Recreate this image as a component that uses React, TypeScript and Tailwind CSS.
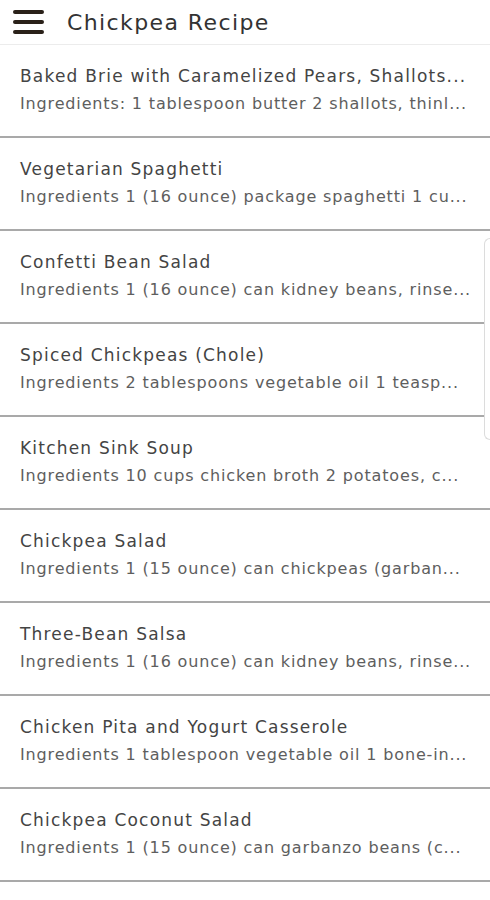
const recipes = [
    { title: "Baked Brie with Caramelized Pears, Shallots...", body: "Ingredients: 1 tablespoon butter 2 shallots, thinl..." },
    { title: "Vegetarian Spaghetti", body: "Ingredients 1 (16 ounce) package spaghetti 1 cu..." },
    { title: "Confetti Bean Salad", body: "Ingredients 1 (16 ounce) can kidney beans, rinse..." },
    { title: "Spiced Chickpeas (Chole)", body: "Ingredients 2 tablespoons vegetable oil 1 teasp..." },
    { title: "Kitchen Sink Soup", body: "Ingredients 10 cups chicken broth 2 potatoes, c..." },
    { title: "Chickpea Salad", body: "Ingredients 1 (15 ounce) can chickpeas (garban..." },
    { title: "Three-Bean Salsa", body: "Ingredients 1 (16 ounce) can kidney beans, rinse..." },
    { title: "Chicken Pita and Yogurt Casserole", body: "Ingredients 1 tablespoon vegetable oil 1 bone-in..." },
    { title: "Chickpea Coconut Salad", body: "Ingredients 1 (15 ounce) can garbanzo beans (c..." },
];

function RecipeRow({ title, body }: { title: string; body: string }) {
    return (
        <div className="h-[93px] border-b-2 border-[#a9a9a9] px-5 pt-[18px]">
            <div className="whitespace-nowrap text-[17px] leading-[27px] tracking-[1.2px] text-[#444]">{title}</div>
            <div className="whitespace-nowrap text-[16px] leading-[27px] tracking-[0.85px] text-[#5e5e5e]">{body}</div>
        </div>
    );
}

export default function App() {
    return (
        <div className="relative w-[490px] h-[900px] overflow-hidden bg-white font-['DejaVu_Sans',sans-serif]">
            <header className="flex h-[45px] items-center gap-[23px] border-b border-[#ececec] pl-[13px]">
                <div className="flex w-[31px] flex-col gap-[6px]">
                    <span className="h-[4px] rounded-full bg-[#2a2119]" />
                    <span className="h-[4px] rounded-full bg-[#2a2119]" />
                    <span className="h-[4px] rounded-full bg-[#2a2119]" />
                </div>
                <h1 className="text-[22px] tracking-[1.4px] text-[#333]">Chickpea Recipe</h1>
            </header>
            <div className="flex flex-col">
                {recipes.map((r) => (
                    <RecipeRow key={r.title} title={r.title} body={r.body} />
                ))}
            </div>
            {/* scroll thumb */}
            <div className="absolute right-0 top-[238px] h-[202px] w-[6px] rounded-l-[6px] border border-r-0 border-[#dcdcdc] bg-white" />
        </div>
    );
}
